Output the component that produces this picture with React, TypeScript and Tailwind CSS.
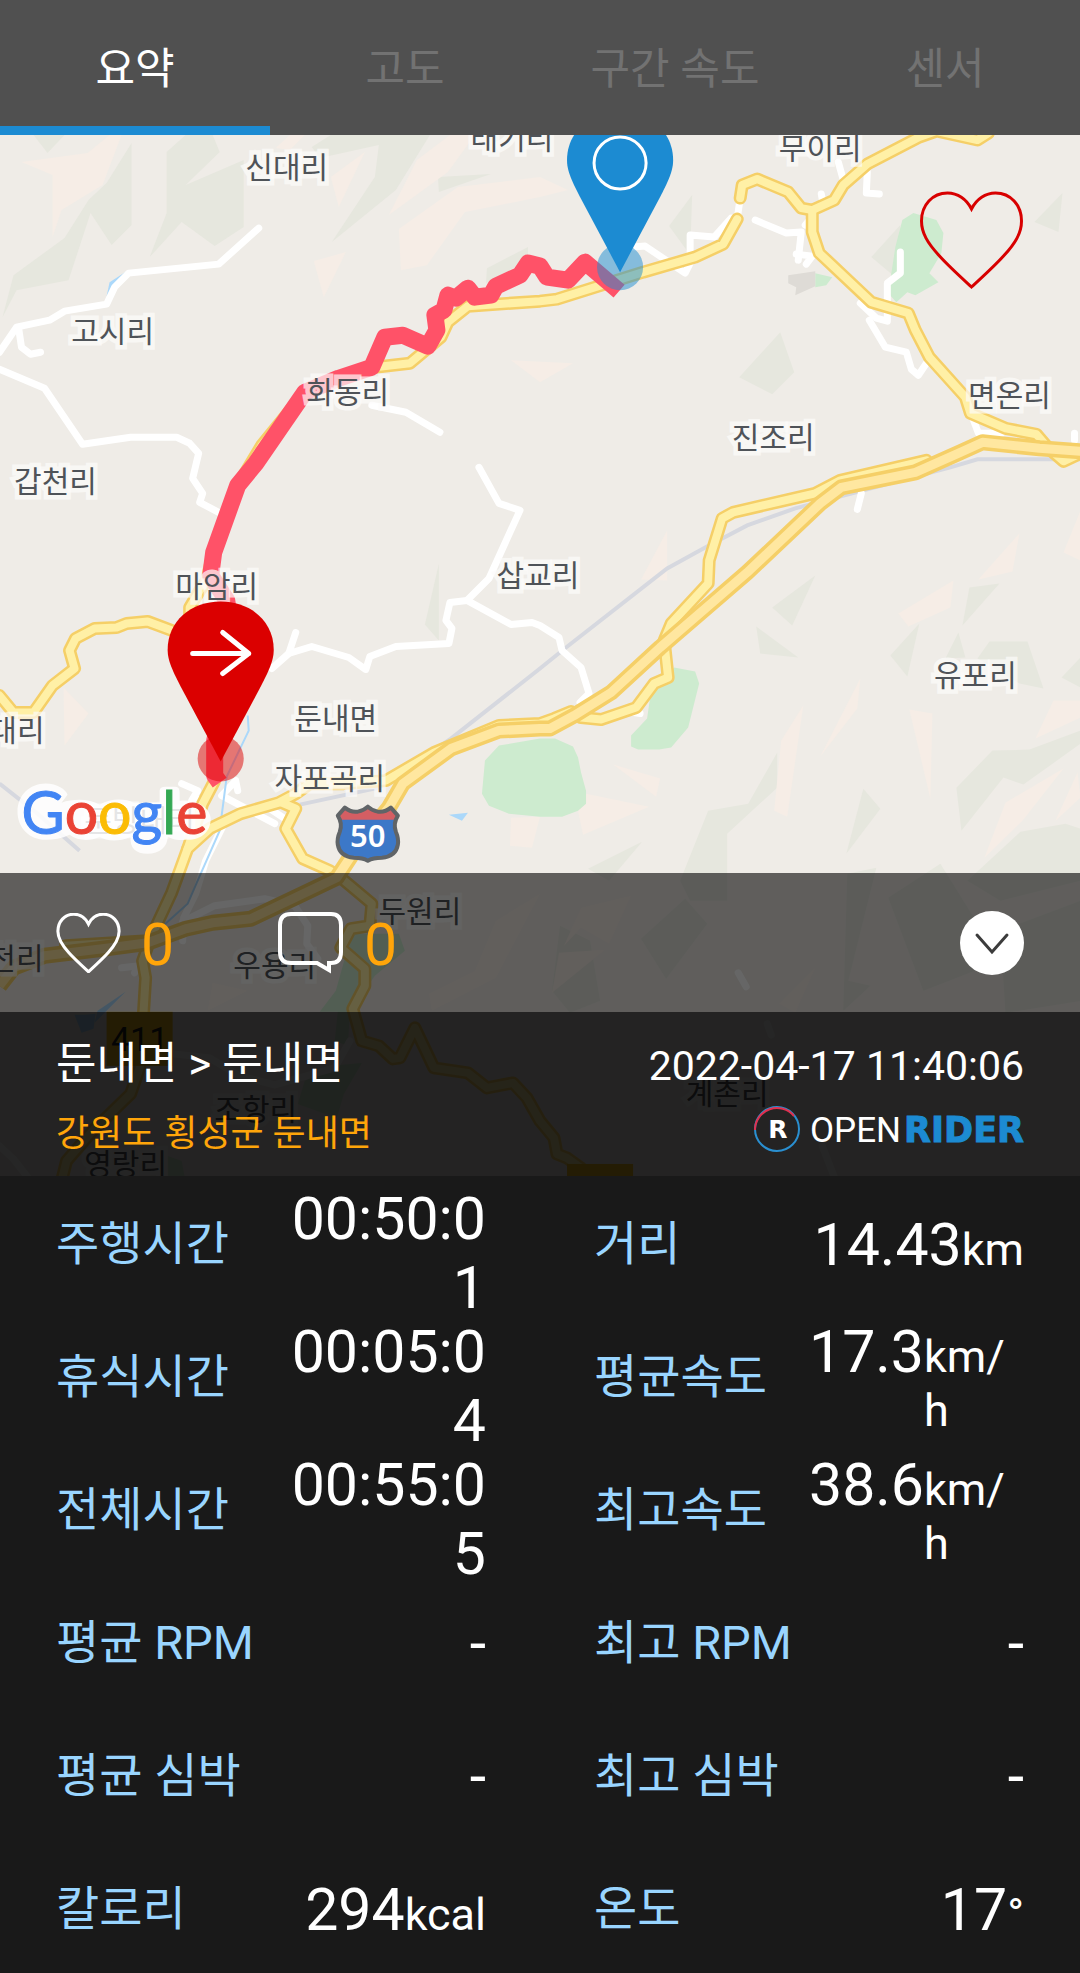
import React, { useState } from "react";

const SANS = "font-['Roboto','Noto_Sans_CJK_KR',sans-serif]";

const hills = [
  "132,143 132,225 112,245 91,213 69,280 17,290 3,317 14,275 65,238 89,200 107,183",
  "167,152 186,135 213,135 220,152 186,185 244,160 244,227 215,246 182,222 150,257 167,213",
  "34,135 65,135 48,153",
  "312,147 331,135 430,135 396,190 332,242 375,177 379,145 320,158",
  "438,177 491,174 439,192",
  "487,268 528,247 528,260 486,283",
  "692,195 669,226 690,255",
  "780,332 794,372 772,394 739,377",
  "900,225 871,257 895,277",
  "1062,193 1034,222 1058,232",
  "815,575 772,607 792,625",
  "756,626 798,657 760,653",
  "919,623 890,655 907,676",
  "969,587 999,583 962,625",
  "958,632 965,657 945,658",
  "989,641 1027,641 1043,688 1019,683 977,658",
  "1080,657 1061,677 1080,687",
  "777,752 777,787 727,833 727,900 690,900 680,880 708,810 748,803",
  "863,788 880,808 846,853",
  "1080,730 1029,749 992,750 956,787 961,830 1003,777 1023,784 1080,743",
  "1080,828 1065,823 1020,831 967,880 1000,900 1080,880",
  "642,841 588,868 609,880",
  "439,563 439,640 425,624",
  "685,898 707,923 666,978 641,938",
  "876,867 847,873 843,1010 870,985 848,980",
  "888,897 940,863 1000,960 923,990",
  "560,925 590,940 600,1000 570,1012 552,990",
  "1000,930 1080,900 1080,1000 1005,1012",
];

const sands = [
  "22,162 88,153 110,135 122,135 103,185 62,210 53,237 53,175",
  "331,177 365,152 339,207",
  "417,160 450,135 475,135 448,172 389,215",
  "276,148 290,135 305,135 290,150",
  "399,229 458,187 540,177 568,190 540,197 465,212 427,265 401,270",
  "314,261 346,252 324,297",
  "511,360 573,363 540,382",
  "667,530 667,580 641,579",
  "1019,533 1012,571 978,579",
  "953,580 950,607 908,626 898,613",
  "1080,510 1063,552 1080,560",
  "1053,700 1080,700 1080,717 1035,738",
  "909,709 932,713 930,798",
  "860,678 857,708 820,756",
  "803,705 787,816 774,810 781,740",
  "613,764 660,778 656,796",
  "586,793 649,806 583,834 578,810",
  "1063,768 1005,802 984,857 1022,820",
  "1077,772 1055,820 1080,797",
  "511,817 540,816 532,847 510,845",
  "64,687 89,713 65,745",
  "581,907 631,895 609,943 581,927 564,945",
  "559,952 605,949 552,992",
  "815,967 779,1003 795,1012",
  "540,893 496,920 475,970 429,993 432,1010 496,977",
  "213,982 248,990 208,1010",
];

const parks = [
  "485,760 499,745 540,738 555,738 573,746 578,757 581,772 586,790 586,803 578,810 562,816 540,816 509,813 489,805 482,793",
  "674,667 695,671 699,683 688,727 671,747 659,749 638,749 631,746 631,735 647,718 650,697",
  "913,213 936,220 943,233 941,253 929,273 938,282 915,295 907,292 896,302 888,293 895,247 902,220",
  "815,273 832,277 826,285 815,287",
  "352,933 399,933 405,950 375,975 350,1012 348,1045 335,1040 338,1011 320,1011 336,990",
  "330,1065 362,1062 344,1093 337,1117 298,1103 305,1080",
  "168,1155 182,1160 185,1176 168,1176",
];

const lanes = [
  "259,228 219,264 129,273 115,287 107,304 65,311 50,320 17,327 0,352",
  "19,327 22,347 31,354 41,352",
  "0,369 45,388 83,444 131,437 177,437 190,443 199,453 193,478 203,493 200,502 219,512",
  "372,405 406,412 440,432",
  "479,467 499,503 520,510 489,578 467,600 450,602 446,620 452,628 449,643 396,646 370,656 366,669 349,657 312,646 289,653 272,668",
  "289,653 296,632",
  "467,600 511,624 532,622 540,625 559,637 562,650 581,667 589,693 580,702",
  "633,247 645,246 685,273 690,263 690,235 714,237 731,218 737,219 740,198",
  "755,220 786,233 801,232 798,260",
  "796,254 812,256 806,264",
  "838,162 843,180",
  "867,172 866,193 879,194",
  "821,194 823,204 805,225",
  "900,252 900,273 887,283 887,321 876,318 860,303",
  "869,320 885,347 906,352 911,369 918,375 926,363",
  "972,417 978,433 1001,433",
  "861,493 857,509",
  "1074,433 1074,440",
  "640,713 628,711",
  "182,783 198,790 192,800 206,798",
  "238,790 236,780 222,795 275,823",
  "270,808 285,818",
  "225,822 206,860 196,893 184,917 183,940",
  "183,921 215,905 265,898 295,905 308,925 307,943 318,958",
  "122,967 140,965 135,972",
  "738,972 746,986",
  "767,1023 771,1034",
  "0,1145 14,1158 28,1176",
  "174,1053 210,1057 240,1075 275,1084 335,1067 350,1040",
  "822,1145 834,1176",
];

const yellowRoads = [
  "737,219 723,244 695,257 643,272 557,299 540,301 468,306 448,322 441,337 410,363 375,367 339,378 305,392 262,445 238,485 214,550 207,580 200,590 190,607 190,640",
  "740,198 742,185 757,179 788,192 801,208 812,210 834,200 843,185 867,164 919,137 936,131 977,140 988,133",
  "812,210 812,232 819,253 871,302 908,313 915,330 929,357 965,397 970,413 1005,428 1036,434 1048,448 1063,461 1080,453",
  "926,460 840,480 815,493 733,512 722,518 709,560 708,583 671,623 664,640 668,677 654,683 636,707 601,719 581,717",
  "571,711 554,718 540,723 499,725 434,752 386,780 344,783 310,783 296,793 279,802 241,813 210,828 188,848 172,892 151,937 143,960 146,977 144,1010 140,1067 131,1093 93,1130 67,1160 62,1180",
  "215,780 203,803 188,848",
  "282,802 296,808 286,828 303,858 330,870 341,877 372,903 370,925 351,928 341,947 365,968 365,985 353,1008 362,1040 379,1045 393,1058 400,1057 415,1027 434,1067 468,1072 487,1087 513,1082 527,1097 540,1120 554,1137 557,1153 567,1157 581,1167",
  "175,631 148,621 127,623 117,627 95,628 76,638 70,650 75,668 53,685 34,712 14,712 0,695",
  "148,940 66,945",
];

const motorway =
  "1080,451 1039,448 982,442 960,452 915,472 841,487 820,503 747,572 660,647 611,692 574,715 550,728 540,728 499,730 451,748 403,783 389,807 360,842 337,877 251,918 213,922 186,928 148,942 103,948 45,955 14,967 0,985";

const railways = [
  "1080,459 977,459 950,467 795,508 747,525 705,547 667,568 566,647 540,668 451,738 379,787 300,804",
  "0,783 38,813 80,850",
];

const track =
  "619,291 585,262 568,280 547,277 540,266 528,263 520,275 496,286 491,295 475,297 468,288 456,298 448,295 444,310 435,315 437,330 428,346 403,335 385,337 372,367 339,378 305,392 256,463 238,485 214,552 211,575 227,600 235,650 215,740 215,775 220,782";

const places: { name: string; x: number; y: number; end?: boolean }[] = [
  { name: "신대리", x: 287, y: 178 },
  { name: "태기리", x: 512, y: 149 },
  { name: "무이리", x: 820, y: 159 },
  { name: "고시리", x: 113, y: 342 },
  { name: "화동리", x: 348, y: 403 },
  { name: "면온리", x: 1009, y: 406 },
  { name: "진조리", x: 773, y: 448 },
  { name: "갑천리", x: 56, y: 492 },
  { name: "마암리", x: 217, y: 597 },
  { name: "삽교리", x: 538, y: 586 },
  { name: "유포리", x: 975, y: 685 },
  { name: "둔내면", x: 336, y: 728 },
  { name: "대리", x: 45, y: 740, end: true },
  { name: "자포곡리", x: 330, y: 788 },
  { name: "둔방내리", x: 140, y: 830 },
  { name: "두원리", x: 420, y: 921 },
  { name: "현천리", x: 44, y: 968, end: true },
  { name: "우용리", x: 275, y: 975 },
  { name: "조항리", x: 256, y: 1119 },
  { name: "영랑리", x: 126, y: 1174 },
  { name: "계촌리", x: 727, y: 1103 },
];

const PIN =
  "M0 0 L-40 -75 C-50 -94 -53 -103 -53 -112 C-53 -140 -30 -160 0 -160 C30 -160 53 -140 53 -112 C53 -103 50 -94 40 -75 Z";

function RouteMap() {
  return (
    <svg
      className="absolute inset-0 h-full w-full"
      viewBox="0 135 1080 1040"
      preserveAspectRatio="xMidYMin slice"
      role="img"
      aria-label="주행 경로 지도"
    >
      <rect x="0" y="135" width="1080" height="1042" fill="#efece7" />
      {hills.map((p) => (
        <polygon key={p} points={p} fill="#e6e7de" />
      ))}
      {sands.map((p) => (
        <polygon key={p} points={p} fill="#f6ede6" />
      ))}
      {parks.map((p) => (
        <polygon key={p} points={p} fill="#cdebcf" />
      ))}
      <polygon points="788,275 815,271 815,286 795,295 796,287 788,283" fill="#dedbd6" />
      <g fill="#abd8fa">
        <polygon points="127,271 110,282 107,296 119,282" />
        <polygon points="449,814 468,812 462,820" />
        <polygon points="126,991 98,1010 95,1022" />
        <polygon points="75,1014 86,1014 96,1013 94,1028 82,1032" />
      </g>
      <g fill="none" stroke="#d6d8df" strokeWidth="4">
        {railways.map((p) => (
          <polyline key={p} points={p} />
        ))}
      </g>
      <g fill="none" stroke="#ffffff" strokeWidth="7" strokeLinecap="round" strokeLinejoin="round">
        {lanes.map((p) => (
          <polyline key={p} points={p} />
        ))}
      </g>
      <polyline points="248,715 249,730 227,776 220,830 198,880 188,903 158,930" fill="none" stroke="#abd8fa" strokeWidth="2" />
      <g fill="none" stroke="#f5cf67" strokeWidth="13" strokeLinecap="round" strokeLinejoin="round">
        {yellowRoads.map((p) => (
          <polyline key={p} points={p} />
        ))}
      </g>
      <g fill="none" stroke="#fff0a6" strokeWidth="8" strokeLinecap="round" strokeLinejoin="round">
        {yellowRoads.map((p) => (
          <polyline key={p} points={p} />
        ))}
      </g>
      <polyline points={motorway} fill="none" stroke="#f5cf67" strokeWidth="16" strokeLinejoin="round" />
      <polyline points={motorway} fill="none" stroke="#ffe7a0" strokeWidth="9" strokeLinejoin="round" />
      <polyline points={track} fill="none" stroke="#ff5268" strokeWidth="17" strokeLinejoin="round" />

      <rect x="107" y="1011" width="66" height="54" fill="#f2bd1d" />
      <rect x="567" y="1163" width="66" height="20" fill="#f2bd1d" />
      <text x="140" y="1050" textAnchor="middle" fontSize="34" fill="#1c1c1c" className={SANS}>
        411
      </text>

      <g
        className={SANS}
        fontSize="30"
        fill="#4f5358"
        stroke="#fdfcfb"
        strokeOpacity="0.7"
        strokeWidth="9"
        strokeLinejoin="miter"
        paintOrder="stroke"
      >
        {places.map((p) => (
          <text key={p.name} x={p.x} y={p.y} textAnchor={p.end ? "end" : "middle"}>
            {p.name}
          </text>
        ))}
      </g>

      {/* Route 50 shield */}
      <path
        d="M345 807 Q351 812 358 811 Q364 810 368 806 Q372 810 378 811 Q385 812 391 807 L398 815 Q393 823 396 831 Q399 838 398 844 Q396 856 382 857 Q373 857 368 860 Q363 857 354 857 Q340 856 338 844 Q337 838 340 831 Q343 823 338 815 Z"
        fill="#3c78c8"
      />
      <path d="M345 807 Q351 812 358 811 Q364 810 368 806 Q372 810 378 811 Q385 812 391 807 L398 815 L395 819 L341 819 L338 815 Z" fill="#d45e63" />
      <path
        d="M345 807 Q351 812 358 811 Q364 810 368 806 Q372 810 378 811 Q385 812 391 807 L398 815 Q393 823 396 831 Q399 838 398 844 Q396 856 382 857 Q373 857 368 860 Q363 857 354 857 Q340 856 338 844 Q337 838 340 831 Q343 823 338 815 Z"
        fill="none"
        stroke="#606467"
        strokeWidth="4"
        strokeLinejoin="round"
      />
      <text x="368" y="846" textAnchor="middle" fontSize="31" fontWeight="600" fill="#fff" className="font-['Noto_Sans',sans-serif]">
        50
      </text>

      {/* Start and finish markers */}
      <circle cx="620" cy="267" r="23" fill="#1c8bd2" fillOpacity="0.5" />
      <path d={PIN} transform="translate(620 272)" fill="#1c8bd2" />
      <circle cx="620" cy="163" r="26" fill="none" stroke="#fff" strokeWidth="3" />
      <circle cx="221" cy="758" r="23" fill="#db0000" fillOpacity="0.5" />
      <path d={PIN} transform="translate(221 761)" fill="#db0000" />
      <path d="M193 653 H249 M223 632 L249 653 L223 673" fill="none" stroke="#fff" strokeWidth="5" strokeLinecap="round" strokeLinejoin="round" />

      {/* Halo behind the map provider's name */}
      <path
        d="M46 783 C58 783 66 789 68 794 L62 802 C74 798 90 798 100 804 C112 797 126 798 134 802 H160 V790 Q160 786 166 786 H176 Q180 786 180 792 V800 C198 798 211 808 211 818 C211 832 200 840 186 839 C177 840 172 838 168 836 C168 846 160 853 148 853 C136 853 130 847 131 836 C118 842 106 840 100 836 C90 841 78 840 70 834 C62 838 54 839 46 839 C30 839 18 827 18 811 C18 795 30 783 46 783 Z"
        fill="#fff"
        fillOpacity="0.85"
      />
      <text x="22" y="833" className="font-['Lato',sans-serif]" fontSize="59" strokeWidth="1">
        <tspan fill="#4285f4" stroke="#4285f4">G</tspan>
        <tspan fill="#ea4335" stroke="#ea4335">o</tspan>
        <tspan fill="#fbbc05" stroke="#fbbc05">o</tspan>
        <tspan fill="#4285f4" stroke="#4285f4">g</tspan>
        <tspan fill="#34a853" stroke="#34a853">l</tspan>
        <tspan fill="#ea4335" stroke="#ea4335">e</tspan>
      </text>
    </svg>
  );
}

function Heart({ className, width }: { className: string; width: number }) {
  return (
    <svg viewBox="0 0 104 98" className={className} fill="none" stroke="currentColor" strokeWidth={width} strokeLinejoin="miter" aria-hidden="true">
      <path d="M52 18 C47 8 38 2 28 2 C13 2 2 14 2 30 C2 42 8 52 20 65 C29 75 40 85 52 96 C64 85 75 75 84 65 C96 52 102 42 102 30 C102 14 91 2 76 2 C66 2 57 8 52 18 Z" />
    </svg>
  );
}

const tabs = ["요약", "고도", "구간 속도", "센서"];

const stats: { label: string; value: string; unit?: string; time?: boolean }[] = [
  { label: "주행시간", value: "00:50:01", time: true },
  { label: "거리", value: "14.43", unit: "km" },
  { label: "휴식시간", value: "00:05:04", time: true },
  { label: "평균속도", value: "17.3", unit: "km/h" },
  { label: "전체시간", value: "00:55:05", time: true },
  { label: "최고속도", value: "38.6", unit: "km/h" },
  { label: "평균 RPM", value: "-" },
  { label: "최고 RPM", value: "-" },
  { label: "평균 심박", value: "-" },
  { label: "최고 심박", value: "-" },
  { label: "칼로리", value: "294", unit: "kcal" },
  { label: "온도", value: "17", unit: "°" },
];

export default function App() {
  const [active, setActive] = useState(0);

  return (
    <main className={`w-full bg-[#191919] text-white ${SANS}`}>
      <nav role="tablist" aria-label="주행 기록" className="grid h-[135px] grid-cols-4 bg-[#505050]">
        {tabs.map((tab, i) => (
          <button
            key={tab}
            type="button"
            role="tab"
            aria-selected={i === active}
            onClick={() => setActive(i)}
            className={
              i === active
                ? "border-b-[9px] border-[#1c8bd2] pt-3 text-[43px] text-white"
                : "border-b-[9px] border-transparent pt-3 text-[43px] text-[#727272]"
            }
          >
            {tab}
          </button>
        ))}
      </nav>

      <section className="relative overflow-hidden">
        <RouteMap />

        <div className="relative flex h-[738px] items-start justify-end px-14 pt-14">
          <button type="button" aria-label="즐겨찾기" className="text-[#d80000]">
            <Heart className="h-[98px] w-[105px]" width={3} />
          </button>
        </div>

        <div className="relative flex h-[139px] items-center bg-black/60 px-14">
          <button type="button" aria-label="좋아요 0" className="flex w-[222px] items-center gap-5">
            <Heart className="h-[60px] w-[65px]" width={5} />
            <span className="pt-1 text-[59px] leading-[69px] text-[#ffa50a]">0</span>
          </button>
          <button type="button" aria-label="댓글 0" className="flex items-center gap-5">
            <svg viewBox="0 0 66 62" className="h-[62px] w-[66px]" fill="none" stroke="#fff" strokeWidth="4" strokeLinejoin="miter" aria-hidden="true">
              <path d="M13 2 H53 Q63 2 63 13 V40 Q63 51 53 51 H51 V58 L39 51 H13 Q2 51 2 40 V13 Q2 2 13 2 Z" />
            </svg>
            <span className="pt-1 text-[59px] leading-[69px] text-[#ffa50a]">0</span>
          </button>
          <button type="button" aria-label="접기" className="ml-auto">
            <svg viewBox="0 0 64 64" className="size-16" aria-hidden="true">
              <circle cx="32" cy="32" r="32" fill="#fff" />
              <path d="M17 24 L32 41 L47 24" fill="none" stroke="#3c3c3c" strokeWidth="3" strokeLinecap="round" strokeLinejoin="miter" />
            </svg>
          </button>
        </div>

        <div className="relative flex h-[164px] justify-between bg-black/85 px-14 pt-5">
          <div>
            <h1 className="text-[44px] leading-[64px]">둔내면 &gt; 둔내면</h1>
            <p className="pt-2 text-4xl leading-[60px] text-[#ffa50a]">강원도 횡성군 둔내면</p>
          </div>
          <div className="flex flex-col items-end">
            <time className="text-[41px] leading-[68px]">2022-04-17 11:40:06</time>
            <svg viewBox="0 0 272 48" className="mt-1 h-12 w-[272px]" role="img" aria-label="OPENRIDER">
              <circle cx="25" cy="25" r="22" fill="none" stroke="#2a8fd0" strokeWidth="2" />
              <path d="M3 26 A22 22 0 0 1 42 12" fill="none" stroke="#e0304f" strokeWidth="2" />
              <text x="26" y="34" textAnchor="middle" fontSize="25" fontWeight="700" fill="#fff" className="font-['DejaVu_Sans',sans-serif]">
                R
              </text>
              <text x="58" y="38" fontSize="35" fill="#fff" className="font-['Roboto',sans-serif]">
                OPEN
              </text>
              <text
                x="272"
                y="38"
                textAnchor="end"
                fontSize="35"
                fontWeight="700"
                fill="#1c8bd2"
                stroke="#1c8bd2"
                strokeWidth="1"
                className="font-['DejaVu_Sans',sans-serif]"
              >
                RIDER
              </text>
            </svg>
          </div>
        </div>
      </section>

      <dl className="grid auto-rows-[133px] grid-cols-2 gap-x-[108px] px-14">
        {stats.map((s) => (
          <div key={s.label} className="grid h-[133px] grid-cols-2 items-center">
            <dt className="pt-0.5 text-[47px] leading-[64px] whitespace-nowrap text-[#99d5ff]">{s.label}</dt>
            <dd
              className={
                s.time
                  ? "-my-5 pt-5 text-right text-[59px] leading-[69px] break-all"
                  : "flex items-baseline justify-end pt-1 text-[59px] leading-[69px]"
              }
            >
              {s.time ? s.value : <span className="shrink-0">{s.value}</span>}
              {s.unit && <span className="text-[45px] leading-[54px] break-all">{s.unit}</span>}
            </dd>
          </div>
        ))}
      </dl>
    </main>
  );
}
